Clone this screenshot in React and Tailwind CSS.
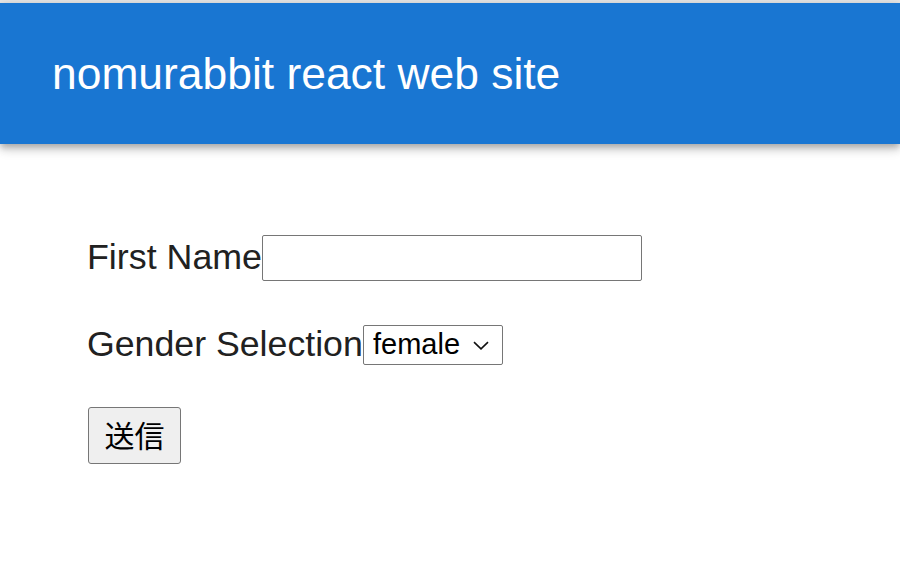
import React from 'react';

export default function App() {
    return (
        <div className="min-h-[577px] bg-white font-['Liberation_Sans',Arial,sans-serif]">
            <div className="h-[3px] bg-[#e6e6e6]" />
            <header className="h-[141px] bg-[#1976d2] flex items-center pl-[52px] shadow-[0_3px_6px_-1px_rgba(0,0,0,0.2),0_6px_8px_0_rgba(0,0,0,0.14),0_2px_15px_0_rgba(0,0,0,0.12)]">
                <h1 className="text-[44.4px] leading-[1.149] text-white font-normal">nomurabbit react web site</h1>
            </header>

            <form className="pl-[87px] pt-[91px] text-[#212121]" onSubmit={e => e.preventDefault()}>
                <div className="flex items-center h-[46px]">
                    <label className="text-[35.8px] leading-[1.149]">First Name</label>
                    <input type="text" className="w-[380px] h-[46px] border border-[#767676] rounded-[2px] bg-white" />
                </div>

                <div className="flex items-center h-[41px] mt-[43px]">
                    <label className="text-[35.7px] leading-[1.149] w-[276px] shrink-0 whitespace-nowrap">Gender Selection</label>
                    <div className="relative">
                        <select defaultValue="female" className="appearance-none w-[140px] h-[40px] border border-[#767676] rounded-[2px] bg-white text-black text-[29px] leading-none pl-[9px] pr-[30px]">
                            <option value="male">male</option>
                            <option value="female">female</option>
                        </select>
                        <svg className="absolute right-[14px] top-[16px] pointer-events-none" width="16" height="9" viewBox="0 0 16 9" fill="none">
                            <path d="M1 1.2L8 7.8L15 1.2" stroke="#111" strokeWidth="1.6" />
                        </svg>
                    </div>
                </div>

                <div className="mt-[42px] ml-[1px]">
                    <button type="submit" className="w-[93px] h-[57px] flex items-center justify-center pb-[3px] bg-[#efefef] border border-[#767676] rounded-[3px] text-black text-[30px] font-['Noto_Sans_CJK_JP',sans-serif] leading-none">
                        送信
                    </button>
                </div>
            </form>
        </div>
    );
}
